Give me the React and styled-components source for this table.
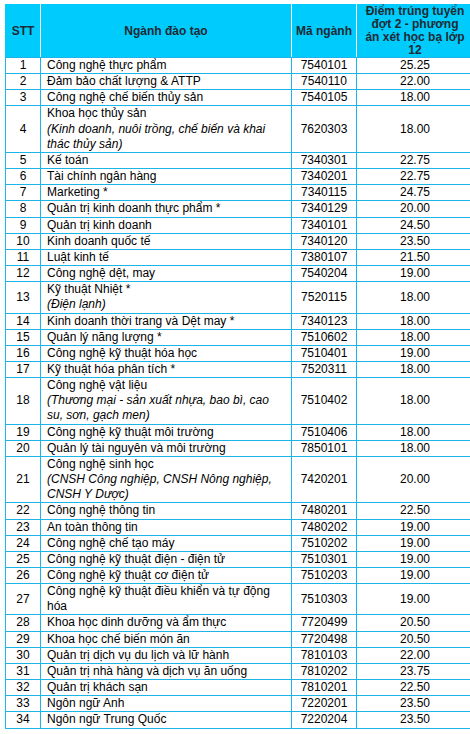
import React from 'react';
import styled, { createGlobalStyle } from 'styled-components';

const GlobalStyle = createGlobalStyle`
  html, body {
    margin: 0;
    padding: 0;
    background: #ffffff;
    overflow: hidden;
  }
  body {
    font-family: "Liberation Sans", Arial, Helvetica, sans-serif;
  }
`;

const Page = styled.div`
  padding: 4px 0 0 5px;
  width: 480px;
`;

const Table = styled.table`
  border-collapse: collapse;
  table-layout: fixed;
  width: 468px;
  font-size: 12px;
  color: #000;
`;

const HeadCell = styled.th`
  background: #00cbfd;
  color: #1f2a33;
  font-weight: bold;
  font-size: 12px;
  line-height: 13px;
  padding: 0;
  text-align: center;
  vertical-align: middle;
  border-left: 1px solid ${p => (p.$first ? '#00cbfd' : '#ffffff')};
  border-right: 1px solid #ffffff;
  border-top: 1px solid #00cbfd;
  border-bottom: 1px solid #1db4e8;
`;

const Cell = styled.td`
  border: 1px solid #1db4e8;
  padding: ${p => (p.$align === 'left' ? '0 4px 0 6px' : '0')};
  text-align: ${p => p.$align || 'center'};
  vertical-align: middle;
  line-height: 15.15px;
  white-space: nowrap;
`;

const Note = styled.i`
  font-style: italic;
`;

const rows = [
  ['1', 'Công nghệ thực phẩm', '7540101', '25.25'],
  ['2', 'Đảm bảo chất lượng & ATTP', '7540110', '22.00'],
  ['3', 'Công nghệ chế biến thủy sản', '7540105', '18.00'],
  ['4', 'Khoa học thủy sản', '7620303', '18.00', ['(Kinh doanh, nuôi trồng, chế biến và khai', 'thác thủy sản)']],
  ['5', 'Kế toán', '7340301', '22.75'],
  ['6', 'Tài chính ngân hàng', '7340201', '22.75'],
  ['7', 'Marketing *', '7340115', '24.75'],
  ['8', 'Quản trị kinh doanh thực phẩm *', '7340129', '20.00'],
  ['9', 'Quản trị kinh doanh', '7340101', '24.50'],
  ['10', 'Kinh doanh quốc tế', '7340120', '23.50'],
  ['11', 'Luật kinh tế', '7380107', '21.50'],
  ['12', 'Công nghệ dệt, may', '7540204', '19.00'],
  ['13', 'Kỹ thuật Nhiệt *', '7520115', '18.00', ['(Điện lạnh)']],
  ['14', 'Kinh doanh thời trang và Dệt may *', '7340123', '18.00'],
  ['15', 'Quản lý năng lượng *', '7510602', '18.00'],
  ['16', 'Công nghệ kỹ thuật hóa học', '7510401', '19.00'],
  ['17', 'Kỹ thuật hóa phân tích *', '7520311', '18.00'],
  ['18', 'Công nghệ vật liệu', '7510402', '18.00', ['(Thương mại - sản xuất nhựa, bao bì, cao', 'su, sơn, gạch men)']],
  ['19', 'Công nghệ kỹ thuật môi trường', '7510406', '18.00'],
  ['20', 'Quản lý tài nguyên và môi trường', '7850101', '18.00'],
  ['21', 'Công nghệ sinh học', '7420201', '20.00', ['(CNSH Công nghiệp, CNSH Nông nghiệp,', 'CNSH Y Dược)']],
  ['22', 'Công nghệ thông tin', '7480201', '22.50'],
  ['23', 'An toàn thông tin', '7480202', '19.00'],
  ['24', 'Công nghệ chế tạo máy', '7510202', '19.00'],
  ['25', 'Công nghệ kỹ thuật điện - điện tử', '7510301', '19.00'],
  ['26', 'Công nghệ kỹ thuật cơ điện tử', '7510203', '19.00'],
  ['27', ['Công nghệ kỹ thuật điều khiển và tự động', 'hóa'], '7510303', '19.00'],
  ['28', 'Khoa học dinh dưỡng và ẩm thực', '7720499', '20.50'],
  ['29', 'Khoa học chế biến món ăn', '7720498', '20.50'],
  ['30', 'Quản trị dịch vụ du lịch và lữ hành', '7810103', '22.00'],
  ['31', 'Quản trị nhà hàng và dịch vụ ăn uống', '7810202', '23.75'],
  ['32', 'Quản trị khách sạn', '7810201', '22.50'],
  ['33', 'Ngôn ngữ Anh', '7220201', '23.50'],
  ['34', 'Ngôn ngữ Trung Quốc', '7220204', '23.50'],
];

const lines = (parts) =>
  parts.map((t, i) => (
    <React.Fragment key={i}>
      {i > 0 && <br />}
      {t}
    </React.Fragment>
  ));

export default function App() {
  return (
    <Page>
      <GlobalStyle />
      <Table>
        <colgroup>
          <col style={{ width: 35 }} />
          <col style={{ width: 251 }} />
          <col style={{ width: 65 }} />
          <col style={{ width: 117 }} />
        </colgroup>
        <thead>
          <tr>
            <HeadCell $first>STT</HeadCell>
            <HeadCell>Ngành đào tạo</HeadCell>
            <HeadCell>Mã ngành</HeadCell>
            <HeadCell>
              {lines(['Điểm trúng tuyển', 'đợt 2 - phương', 'án xét học bạ lớp', '12'])}
            </HeadCell>
          </tr>
        </thead>
        <tbody>
          {rows.map(([stt, name, code, score, note]) => (
            <tr key={stt}>
              <Cell>{stt}</Cell>
              <Cell $align="left">
                {Array.isArray(name) ? lines(name) : name}
                {note && (
                  <>
                    <br />
                    <Note>{lines(note)}</Note>
                  </>
                )}
              </Cell>
              <Cell>{code}</Cell>
              <Cell>{score}</Cell>
            </tr>
          ))}
        </tbody>
      </Table>
    </Page>
  );
}
